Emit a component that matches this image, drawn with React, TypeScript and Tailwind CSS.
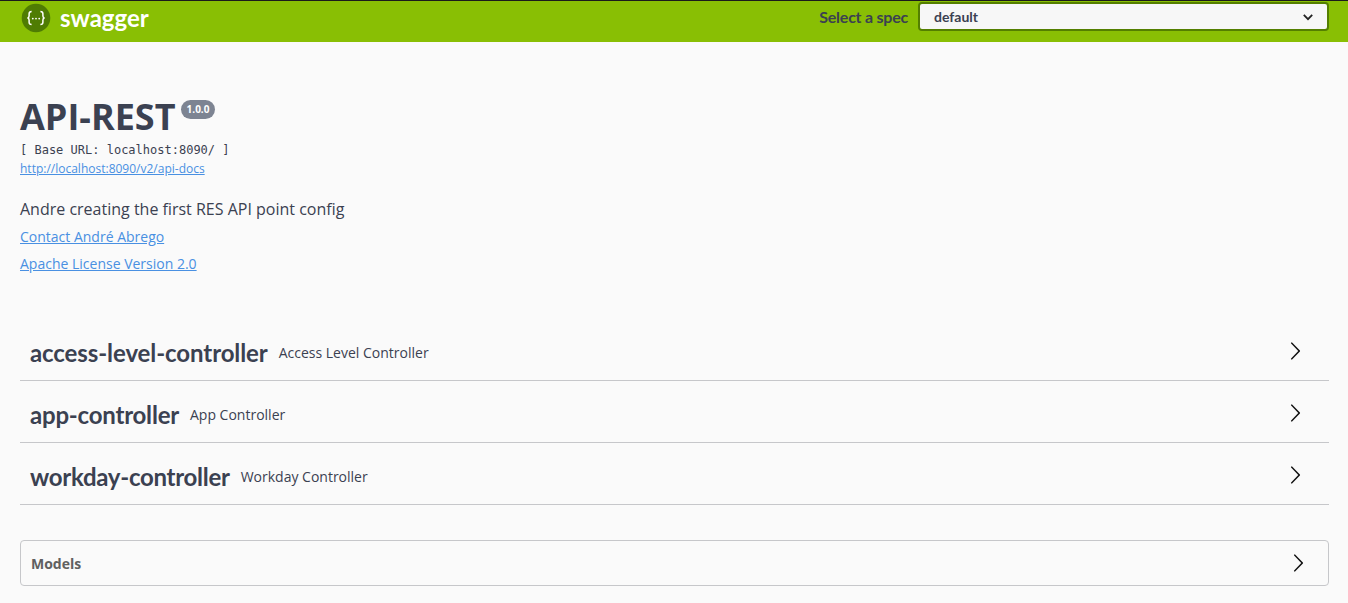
const sans = "font-['Open_Sans',sans-serif]";
const head = "font-['Lato',sans-serif]";

function Chevron({ className }: { className?: string }) {
  return (
    <svg viewBox="0 0 20 20" width="20" height="20" className={className} fill="#111">
      <path d="M13.25 10L6.109 2.58c-.268-.27-.268-.707 0-.979.268-.27.701-.27.969 0l7.83 7.908c.268.271.268.709 0 .979l-7.83 7.908c-.268.271-.701.27-.969 0-.268-.269-.268-.707 0-.979L13.25 10z" />
    </svg>
  );
}

function Logo() {
  return (
    <svg viewBox="0 0 30 30" width="30" height="30">
      <circle cx="15" cy="15" r="14.3" fill="#4f7c03" />
      <path
        d="M10.6 8.5c-1.8 0-2.5.8-2.5 2.3v2.3c0 1.1-.5 1.7-1.6 1.9 1.1.2 1.6.8 1.6 1.9v2.3c0 1.5.7 2.3 2.5 2.3M19.4 8.5c1.8 0 2.5.8 2.5 2.3v2.3c0 1.1.5 1.7 1.6 1.9-1.1.2-1.6.8-1.6 1.9v2.3c0 1.5-.7 2.3-2.5 2.3"
        fill="none"
        stroke="#fff"
        strokeWidth="1.5"
      />
      <circle cx="11.8" cy="15.6" r="0.9" fill="#fff" />
      <circle cx="15" cy="15.6" r="0.9" fill="#fff" />
      <circle cx="18.2" cy="15.6" r="0.9" fill="#fff" />
    </svg>
  );
}

const tags = [
  { name: "access-level-controller", desc: "Access Level Controller", fit: "tracking-[-0.09px]" },
  { name: "app-controller", desc: "App Controller", fit: "tracking-[-0.21px]" },
  { name: "workday-controller", desc: "Workday Controller", fit: "tracking-[-0.28px]" },
];

export default function App() {
  return (
    <div className={`min-h-screen bg-[#fafafa] text-[#3b4151] ${sans}`}>
      {/* TOPBAR */}
      <div className="h-[42px] bg-[#89bf04] border-t border-[#1b1b1b] flex items-start justify-between pl-[21px] pr-[19px]">
        <div className="flex items-center gap-[9px] h-[34px]">
          <Logo />
          <span className={`text-[24px] font-bold text-white ${head}`}>swagger</span>
        </div>
        <div className="flex items-start gap-[10px]">
          <span className={`mt-[4px] text-[16px] leading-[24px] font-bold tracking-[-0.23px] ${head}`}>Select a spec</span>
          <div className="mt-[1px] w-[411px] h-[29px] bg-[#f7f7f7] border-2 border-[#547f00] rounded flex items-center justify-between pl-[14px] pr-[12px]">
            <span className={`text-[14px] font-bold ${head}`}>default</span>
            <svg viewBox="0 0 20 20" width="14" height="14" fill="none" stroke="#222" strokeWidth="2.6">
              <path d="M4 7l6 6 6-6" />
            </svg>
          </div>
        </div>
      </div>

      <div className="pl-5 pr-[19px]">
        {/* INFO */}
        <div className="pt-[52px]">
          <div className="flex items-start">
            <h1 className="text-[36px] leading-[45px] font-bold">API-REST</h1>
            <span className="ml-[5px] mt-[6px] h-[19px] px-[6px] rounded-full bg-[#7d8492] text-white text-[10px] font-bold leading-[19px]">
              1.0.0
            </span>
          </div>
          <p className="mt-[3px] font-['DejaVu_Sans_Mono',monospace] text-[12px] leading-[16px]">[ Base URL: localhost:8090/ ]</p>
          <a className="block mt-[3px] text-[12px] leading-[16px] text-[#4990e2] underline">http://localhost:8090/v2/api-docs</a>
          <p className="mt-[21px] text-[16px] leading-[22px]">Andre creating the first RES API point config</p>
          <a className="block mt-[7px] text-[14px] leading-[19px] text-[#4990e2] underline">Contact André Abrego</a>
          <a className="block mt-[8px] text-[14px] leading-[19px] text-[#4990e2] underline">Apache License Version 2.0</a>
        </div>

        {/* TAGS */}
        <div className="mt-[46px]">
          {tags.map((t) => (
            <div key={t.name} className="h-[62px] border-b border-[#c6c7ca] flex items-center pt-[6px] pl-[10px] pr-[24px]">
              <span className={`text-[24px] font-bold ${t.fit} ${head}`}>{t.name}</span>
              <span className="ml-[11px] text-[14px]">{t.desc}</span>
              <Chevron className="ml-auto -mt-[3px]" />
            </div>
          ))}
        </div>

        {/* MODELS */}
        <div className="mt-[35px] h-[46px] border border-[#c6c7ca] rounded flex items-center justify-between pl-[10px] pr-[20px]">
          <span className="text-[14px] font-bold text-[#606060]">Models</span>
          <Chevron />
        </div>
      </div>
    </div>
  );
}
